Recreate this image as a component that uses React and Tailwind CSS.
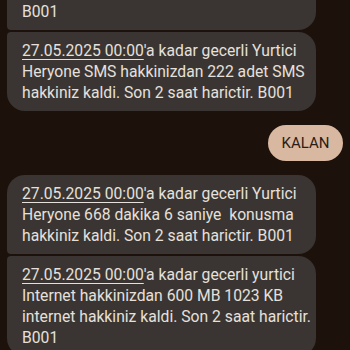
const lines = (arr) =>
  arr.map((l, i) => (
    <span key={i} className="block whitespace-pre">
      {l}
    </span>
  ));

function Date() {
  return <span className="underline underline-offset-[3px] decoration-1">27.05.2025 00:00</span>;
}

function Bubble({ className = "", children }) {
  return (
    <div
      className={`ml-[7px] w-[309px] bg-[#3a3532] px-[15px] py-2 text-[15.7px] leading-[21px] text-[#e6e0dc] ${className}`}
    >
      {children}
    </div>
  );
}

export default function App() {
  return (
    <div
      className="h-[350px] w-[350px] overflow-hidden bg-[#1d120b]"
      style={{ fontFamily: "Roboto, 'Noto Sans', sans-serif" }}
    >
      <div className="flex flex-col">
        <Bubble className="-mt-[40px] pt-[41px] rounded-tl-[18px] rounded-tr-[18px] rounded-bl-[4px] rounded-br-[18px]">
          {lines(["B001"])}
        </Bubble>
        <Bubble className="mt-[2px] rounded-tl-[4px] rounded-tr-[18px] rounded-bl-[18px] rounded-br-[18px]">
          <span className="block whitespace-pre">
            <Date />'a kadar gecerli Yurtici
          </span>
          {lines(["Heryone SMS hakkinizdan 222 adet SMS", "hakkiniz kaldi. Son 2 saat harictir. B001"])}
        </Bubble>

        <div className="mt-[14px] mr-[7px] flex justify-end">
          <div className="flex h-[36px] w-[75px] items-center justify-center rounded-full bg-[#d9b8a1] text-[15px] text-[#2b1d14]">
            KALAN
          </div>
        </div>

        <Bubble className="mt-[14px] rounded-tl-[18px] rounded-tr-[18px] rounded-bl-[4px] rounded-br-[18px]">
          <span className="block whitespace-pre">
            <Date />'a kadar gecerli Yurtici
          </span>
          {lines(["Heryone 668 dakika 6 saniye  konusma", "hakkiniz kaldi. Son 2 saat harictir. B001"])}
        </Bubble>
        <Bubble className="mt-[2px] rounded-tl-[4px] rounded-tr-[18px] rounded-bl-[18px] rounded-br-[18px]">
          <span className="block whitespace-pre">
            <Date />'a kadar gecerli yurtici
          </span>
          {lines([
            "Internet hakkinizdan 600 MB 1023 KB",
            "internet hakkiniz kaldi. Son 2 saat harictir.",
            "B001",
          ])}
        </Bubble>
      </div>
    </div>
  );
}
